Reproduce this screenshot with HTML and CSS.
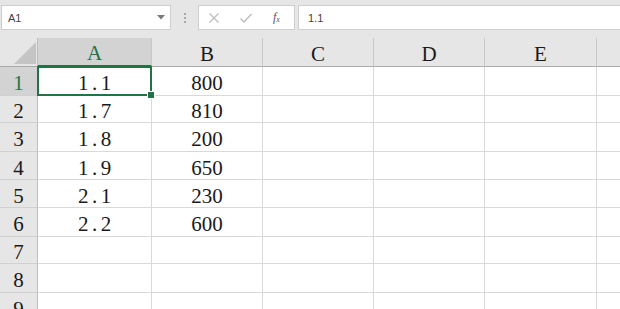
FILE: index.html
```html
<!DOCTYPE html>
<html>
<head>
<meta charset="utf-8">
<link rel="stylesheet" href="styles.css">
</head>
<body>
<div class="app">
  <div class="toolbar">
    <div class="namebox">
      <span class="nb-text">A1</span>
      <svg class="nb-arrow" width="8" height="5" viewBox="0 0 8 5"><path d="M0 0 H8 L4 4.5 Z" fill="#7a7a7a"/></svg>
    </div>
    <div class="dots"><span></span><span></span><span></span></div>
    <div class="fbtns">
      <svg width="12" height="12" viewBox="0 0 12 12"><path d="M1.5 1.5 L10.5 10.5 M10.5 1.5 L1.5 10.5" stroke="#bdbdbd" stroke-width="1.3" fill="none"/></svg>
      <svg width="14" height="12" viewBox="0 0 14 12"><path d="M1.5 6.5 L5 10 L12.5 2" stroke="#bdbdbd" stroke-width="1.4" fill="none"/></svg>
      <span class="fx">f<sub>x</sub></span>
    </div>
    <div class="finput">1.1</div>
  </div>
  <div class="sheet">
    <div class="hd corner"><svg width="22" height="22" viewBox="0 0 22 22"><path d="M22 0 V22 H0 Z" fill="#c4c4c4"/></svg></div>
    <div class="hd col sel-col">A</div>
    <div class="hd col">B</div>
    <div class="hd col">C</div>
    <div class="hd col">D</div>
    <div class="hd col">E</div>
    <div class="hd col last"></div>

    <div class="hd row sel-row">1</div>
    <div class="c a active">1.1<span class="handle"></span></div><div class="c">800</div><div class="c"></div><div class="c"></div><div class="c"></div><div class="c last"></div>

    <div class="hd row">2</div>
    <div class="c a">1.7</div><div class="c">810</div><div class="c"></div><div class="c"></div><div class="c"></div><div class="c last"></div>

    <div class="hd row">3</div>
    <div class="c a">1.8</div><div class="c">200</div><div class="c"></div><div class="c"></div><div class="c"></div><div class="c last"></div>

    <div class="hd row">4</div>
    <div class="c a">1.9</div><div class="c">650</div><div class="c"></div><div class="c"></div><div class="c"></div><div class="c last"></div>

    <div class="hd row">5</div>
    <div class="c a">2.1</div><div class="c">230</div><div class="c"></div><div class="c"></div><div class="c"></div><div class="c last"></div>

    <div class="hd row">6</div>
    <div class="c a">2.2</div><div class="c">600</div><div class="c"></div><div class="c"></div><div class="c"></div><div class="c last"></div>

    <div class="hd row">7</div>
    <div class="c a"></div><div class="c"></div><div class="c"></div><div class="c"></div><div class="c"></div><div class="c last"></div>

    <div class="hd row">8</div>
    <div class="c a"></div><div class="c"></div><div class="c"></div><div class="c"></div><div class="c"></div><div class="c last"></div>

    <div class="hd row">9</div>
    <div class="c a"></div><div class="c"></div><div class="c"></div><div class="c"></div><div class="c"></div><div class="c last"></div>
  </div>
</div>
</body>
</html>
```

FILE: styles.css
```css
* { box-sizing: border-box; }
html, body { margin: 0; padding: 0; }
body { width: 620px; height: 309px; overflow: hidden; background: #fff; }
.app { display: flex; flex-direction: column; width: 620px; height: 309px; }

.toolbar {
  height: 38px;
  background: #e6e6e6;
  display: flex;
  align-items: flex-start;
  padding-top: 5px;
  padding-left: 1px;
  font-family: "Liberation Sans", Arial, sans-serif;
  font-size: 11px;
  color: #444;
  flex: none;
}
.namebox {
  width: 170px;
  height: 25px;
  background: #fff;
  border: 1px solid #cfcfcf;
  display: flex;
  align-items: center;
  justify-content: space-between;
  padding: 0 5px 0 6px;
}
.nb-arrow { margin-bottom: 1px; }
.dots {
  width: 27px;
  height: 25px;
  display: flex;
  flex-direction: column;
  align-items: center;
  justify-content: center;
  gap: 2px;
}
.dots span { width: 2px; height: 2px; background: #a8a8a8; display: block; }
.fbtns {
  width: 97px;
  height: 25px;
  background: #fff;
  border: 1px solid #cfcfcf;
  display: flex;
  align-items: center;
  padding-left: 9px;
  gap: 19px;
}
.fx {
  font-family: "Liberation Serif", "Times New Roman", serif;
  font-style: italic;
  font-size: 12px;
  color: #555;
  margin-left: 1px;
}
.fx sub { font-size: 8px; vertical-align: -1px; }
.finput {
  flex: 1;
  height: 25px;
  margin-left: 3px;
  background: #fff;
  border: 1px solid #cfcfcf;
  border-right: none;
  display: flex;
  align-items: center;
  padding-left: 9px;
}

.sheet {
  flex: 1;
  display: grid;
  grid-template-columns: 38px 114px 111px 111px 111px 112px 1fr;
  grid-template-rows: 29px 29px 27px 29px 28px 28px 29px 27px 29px 28px;
  font-family: "Liberation Serif", "Times New Roman", serif;
  font-size: 21px;
  color: #1a1a1a;
  overflow: hidden;
}
.hd {
  background: #e6e6e6;
  display: flex;
  align-items: center;
  justify-content: center;
}
.corner {
  border-right: 1px solid #bdbdbd;
  border-bottom: 1px solid #ababab;
  align-items: flex-end;
  justify-content: flex-end;
  padding: 0 1px 2px 0;
}
.col {
  border-right: 1px solid #c8c8c8;
  border-bottom: 1px solid #ababab;
  padding-top: 4px;
}
.col.last { border-right: none; }
.sel-col {
  background: #d3d3d3;
  color: #217346;
  border-bottom: 2px solid #217346;
}
.row {
  border-right: 1px solid #bdbdbd;
  border-bottom: 1px solid #d0d0d0;
  padding-top: 5px;
}
.sel-row { background: #d3d3d3; color: #217346; }
.c {
  border-right: 1px solid #d9d9d9;
  border-bottom: 1px solid #d9d9d9;
  display: flex;
  align-items: center;
  justify-content: center;
  padding-top: 5px;
}
.c.last { border-right: none; }
.c.a { letter-spacing: 3.5px; text-indent: 3.5px; }
.active {
  position: relative;
  border: 2px solid #217346;
  margin: -1px 0 0 -1px;
}
.handle {
  position: absolute;
  right: -4px;
  bottom: -4px;
  width: 6px;
  height: 6px;
  background: #217346;
  outline: 1px solid #fff;
}
```
